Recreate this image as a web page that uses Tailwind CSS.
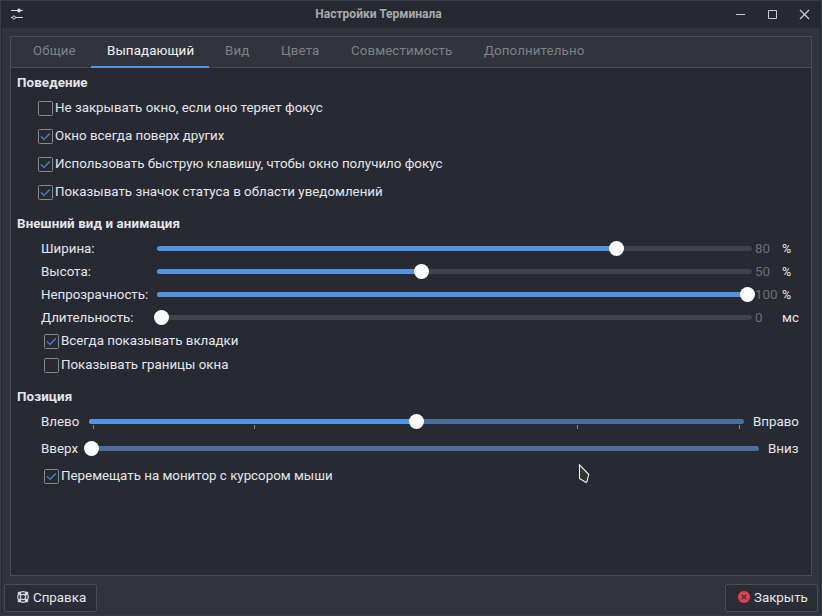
<!DOCTYPE html>
<html lang="ru">
<head>
<meta charset="utf-8">
<title>Настройки Терминала</title>
<script src="https://cdn.jsdelivr.net/npm/@tailwindcss/browser@4"></script>
</head>
<body class="w-[822px] h-[616px] overflow-hidden bg-[#31343d] font-['Roboto','Noto_Sans',sans-serif] text-[13.33px] leading-[18px] text-[#e4e6eb]">
<div class="relative flex flex-col w-[822px] h-[616px] border-x border-y border-[#373b43]">
  <header class="relative flex h-[27px] shrink-0 items-center justify-center bg-[#262931] border-l border-[#25282f]">
    <svg class="absolute left-[8px] top-[6px]" width="14" height="14" viewBox="0 0 14 14" fill="none" stroke="#d3dae3"><path d="M1 3.500h12M1 10.500h1.500M5.500 10.500H13"/><circle cx="9" cy="3.500" r="1.900" fill="#d3dae3" stroke="none"/><circle cx="4" cy="10.500" r="1.500"/></svg>
    <h1 class="text-[12px] font-bold text-[#a9a9aa] -translate-x-[33px] -translate-y-px">Настройки Терминала</h1>
    <svg class="absolute left-[734px] top-[7px]" width="76" height="13" viewBox="0 0 76 13" fill="none" stroke="#c9ced8"><path d="M0 6.500h9M32.500 2.500h8v8h-8z"/><path d="M64 2l9 9M73 2l-9 9" stroke-width="1.200"/></svg>
  </header>
  <div class="flex flex-col flex-1 border-l border-r border-[#282b33] pl-2 pr-[8px] pt-[8px]">
    <main class="flex flex-col h-[540px] w-[802px] border border-[#4a4c52] bg-[#282a33]">
      <nav class="flex h-[31px] shrink-0 border-b border-[#4a4c52] bg-[#31343d] pl-[6px] text-[#7e8187] leading-[27px] tracking-[0.1px]">
        <div class="w-[74px] pl-[16px]">Общие</div>
        <div class="w-[118px] h-[31px] pl-[16px] text-[#f3f4f5] border-b-2 border-[#5294e2]">Выпадающий</div>
        <div class="w-[56px] pl-[16px]">Вид</div>
        <div class="w-[70px] pl-[16px]">Цвета</div>
        <div class="w-[133px] pl-[16px]">Совместимость</div>
        <div class="pl-[16px]">Дополнительно</div>
      </nav>
      <section class="pl-[27px]">
        <h2 class="-ml-[21px] h-[26px] pt-[6px] font-bold tracking-[0.12px]">Поведение</h2>
        <div class="flex h-7 gap-[2px] pt-[5px]"><svg class="mt-[2px]" width="15" height="15" fill="none"><rect x=".5" y=".5" width="14" height="14" rx="1" stroke="#8b8986"/></svg><span>Не закрывать окно, если оно теряет фокус</span></div>
        <div class="flex h-7 gap-[2px] pt-[5px]"><svg class="mt-[2px]" width="15" height="15" fill="none"><rect x=".5" y=".5" width="14" height="14" rx="1" stroke="#8b8986"/><path d="M3 7.500l3 3 5.800-6" stroke="#4a86d0" stroke-width="1.200"/></svg><span>Окно всегда поверх других</span></div>
        <div class="flex h-7 gap-[2px] pt-[5px]"><svg class="mt-[2px]" width="15" height="15" fill="none"><rect x=".5" y=".5" width="14" height="14" rx="1" stroke="#8b8986"/><path d="M3 7.500l3 3 5.800-6" stroke="#4a86d0" stroke-width="1.200"/></svg><span>Использовать быструю клавишу, чтобы окно получило фокус</span></div>
        <div class="flex h-7 gap-[2px] pt-[5px]"><svg class="mt-[2px]" width="15" height="15" fill="none"><rect x=".5" y=".5" width="14" height="14" rx="1" stroke="#8b8986"/><path d="M3 7.500l3 3 5.800-6" stroke="#4a86d0" stroke-width="1.200"/></svg><span>Показывать значок статуса в области уведомлений</span></div>
      </section>
      <section class="pl-[30px]">
        <h2 class="-ml-6 h-[31px] pt-[9px] font-bold tracking-[0.12px]">Внешний вид и анимация</h2>
        <div class="flex h-[23px] items-center"><span class="w-[116px]">Ширина:</span><div class="relative w-[595px] h-[5px] rounded-full bg-[#41444c]"><div class="h-full w-[460px] rounded-full bg-[#5294e2]"></div><i class="absolute left-[452px] -top-[5px] size-[15px] rounded-full bg-white"></i></div><span class="w-[27px] pl-[3px] text-[#6c6f76]">80</span><span class="pl-[3px] text-[12.5px]">%</span></div>
        <div class="flex h-[23px] items-center"><span class="w-[116px]">Высота:</span><div class="relative w-[595px] h-[5px] rounded-full bg-[#41444c]"><div class="h-full w-[265px] rounded-full bg-[#5294e2]"></div><i class="absolute left-[257px] -top-[5px] size-[15px] rounded-full bg-white"></i></div><span class="w-[27px] pl-[3px] text-[#6c6f76]">50</span><span class="pl-[3px] text-[12.5px]">%</span></div>
        <div class="flex h-[23px] items-center"><span class="w-[116px]">Непрозрачность:</span><div class="relative w-[595px] h-[5px] rounded-full bg-[#41444c]"><div class="h-full w-[595px] rounded-full bg-[#5294e2]"></div><i class="absolute left-[583px] -top-[5px] size-[15px] rounded-full bg-white"></i></div><span class="w-[27px] pl-[3px] text-[#6c6f76]">100</span><span class="pl-[3px] text-[12.5px]">%</span></div>
        <div class="flex h-[23px] items-center"><span class="w-[116px]">Длительность:</span><div class="relative w-[595px] h-[5px] rounded-full bg-[#41444c]"><i class="absolute -left-[3px] -top-[5px] size-[15px] rounded-full bg-white"></i></div><span class="w-[27px] pl-[3px] text-[#6c6f76]">0</span><span class="pl-[3px]">мс</span></div>
        <div class="flex h-6 gap-[2px] pt-[3px] pl-[3px]"><svg class="mt-[2px]" width="15" height="15" fill="none"><rect x=".5" y=".5" width="14" height="14" rx="1" stroke="#8b8986"/><path d="M3 7.500l3 3 5.800-6" stroke="#4a86d0" stroke-width="1.200"/></svg><span>Всегда показывать вкладки</span></div>
        <div class="flex h-6 gap-[2px] pt-[3px] pl-[3px]"><svg class="mt-[2px]" width="15" height="15" fill="none"><rect x=".5" y=".5" width="14" height="14" rx="1" stroke="#8b8986"/></svg><span>Показывать границы окна</span></div>
      </section>
      <section class="pl-[30px]">
        <h2 class="-ml-6 h-[31px] pt-[11px] font-bold tracking-[0.12px]">Позиция</h2>
        <div class="flex h-[27px] items-center"><span class="w-[48px]">Влево</span><div class="relative w-[655px] h-[5px] rounded-full bg-[#4b6f9b]"><div class="h-full w-[328px] rounded-full bg-[#5294e2]"></div><svg class="absolute left-0 top-[6px]" width="655" height="4" stroke="#85878b"><path d="M4.500 0v4M165.500 0v4M488.500 0v4M650.500 0v4"/></svg><i class="absolute left-[320px] -top-[5px] size-[15px] rounded-full bg-white"></i></div><span class="pl-[9px]">Вправо</span></div>
        <div class="flex h-[27px] items-center"><span class="w-[46px]">Вверх</span><div class="relative w-[672px] h-[5px] rounded-full bg-[#4b6f9b]"><i class="absolute -left-[3px] -top-[5px] size-[15px] rounded-full bg-white"></i></div><span class="pl-[9px]">Вниз</span></div>
        <div class="flex h-7 gap-[2px] pt-[5px] pl-[3px]"><svg class="mt-[2px]" width="15" height="15" fill="none"><rect x=".5" y=".5" width="14" height="14" rx="1" stroke="#8b8986"/><path d="M3 7.500l3 3 5.800-6" stroke="#4a86d0" stroke-width="1.200"/></svg><span>Перемещать на монитор с курсором мыши</span></div>
      </section>
    </main>
    <footer class="flex justify-between pt-[8px] -ml-[6px] -mr-[6px]">
      <button class="flex w-[93px] h-[28px] items-center gap-[4px] pl-[12px] rounded-[2px] border border-[#494c54] bg-[#2b2d36]">
        <svg class="-translate-y-px" width="12" height="12" viewBox="0 0 12 12" fill="none" stroke="#d3dae3"><circle cx="6" cy="6" r="5.300" stroke-width="1.200"/><circle cx="6" cy="6" r="2.700" stroke-width="1.200"/><path d="M1.200 1.200l2.600 2.600M10.800 1.200L8.200 3.800M1.200 10.800l2.600-2.600M10.800 10.800L8.200 8.200" stroke-width="2.400"/></svg>
        <span>Справка</span>
      </button>
      <button class="flex w-[93px] h-[28px] items-center gap-[4px] pl-[12px] rounded-[2px] border border-[#494c54] bg-[#2b2d36]">
        <svg class="-translate-y-px" width="12" height="12" viewBox="0 0 12 12"><circle cx="6" cy="6" r="6" fill="#e2404f"/><path d="M3.600 3.600l4.800 4.800M8.400 3.600L3.600 8.400" stroke="#30313a" stroke-width="1.200"/></svg>
        <span>Закрыть</span>
      </button>
    </footer>
  </div>
  <svg class="absolute left-[577px] top-[462px]" width="14" height="22" fill="#34352f" stroke="#f0f0f0" stroke-width="1.100"><path d="M1.500 1.800V15.500L8 19.500L9 18.500L10.800 11.500z"/></svg>
</div>
</body>
</html>
